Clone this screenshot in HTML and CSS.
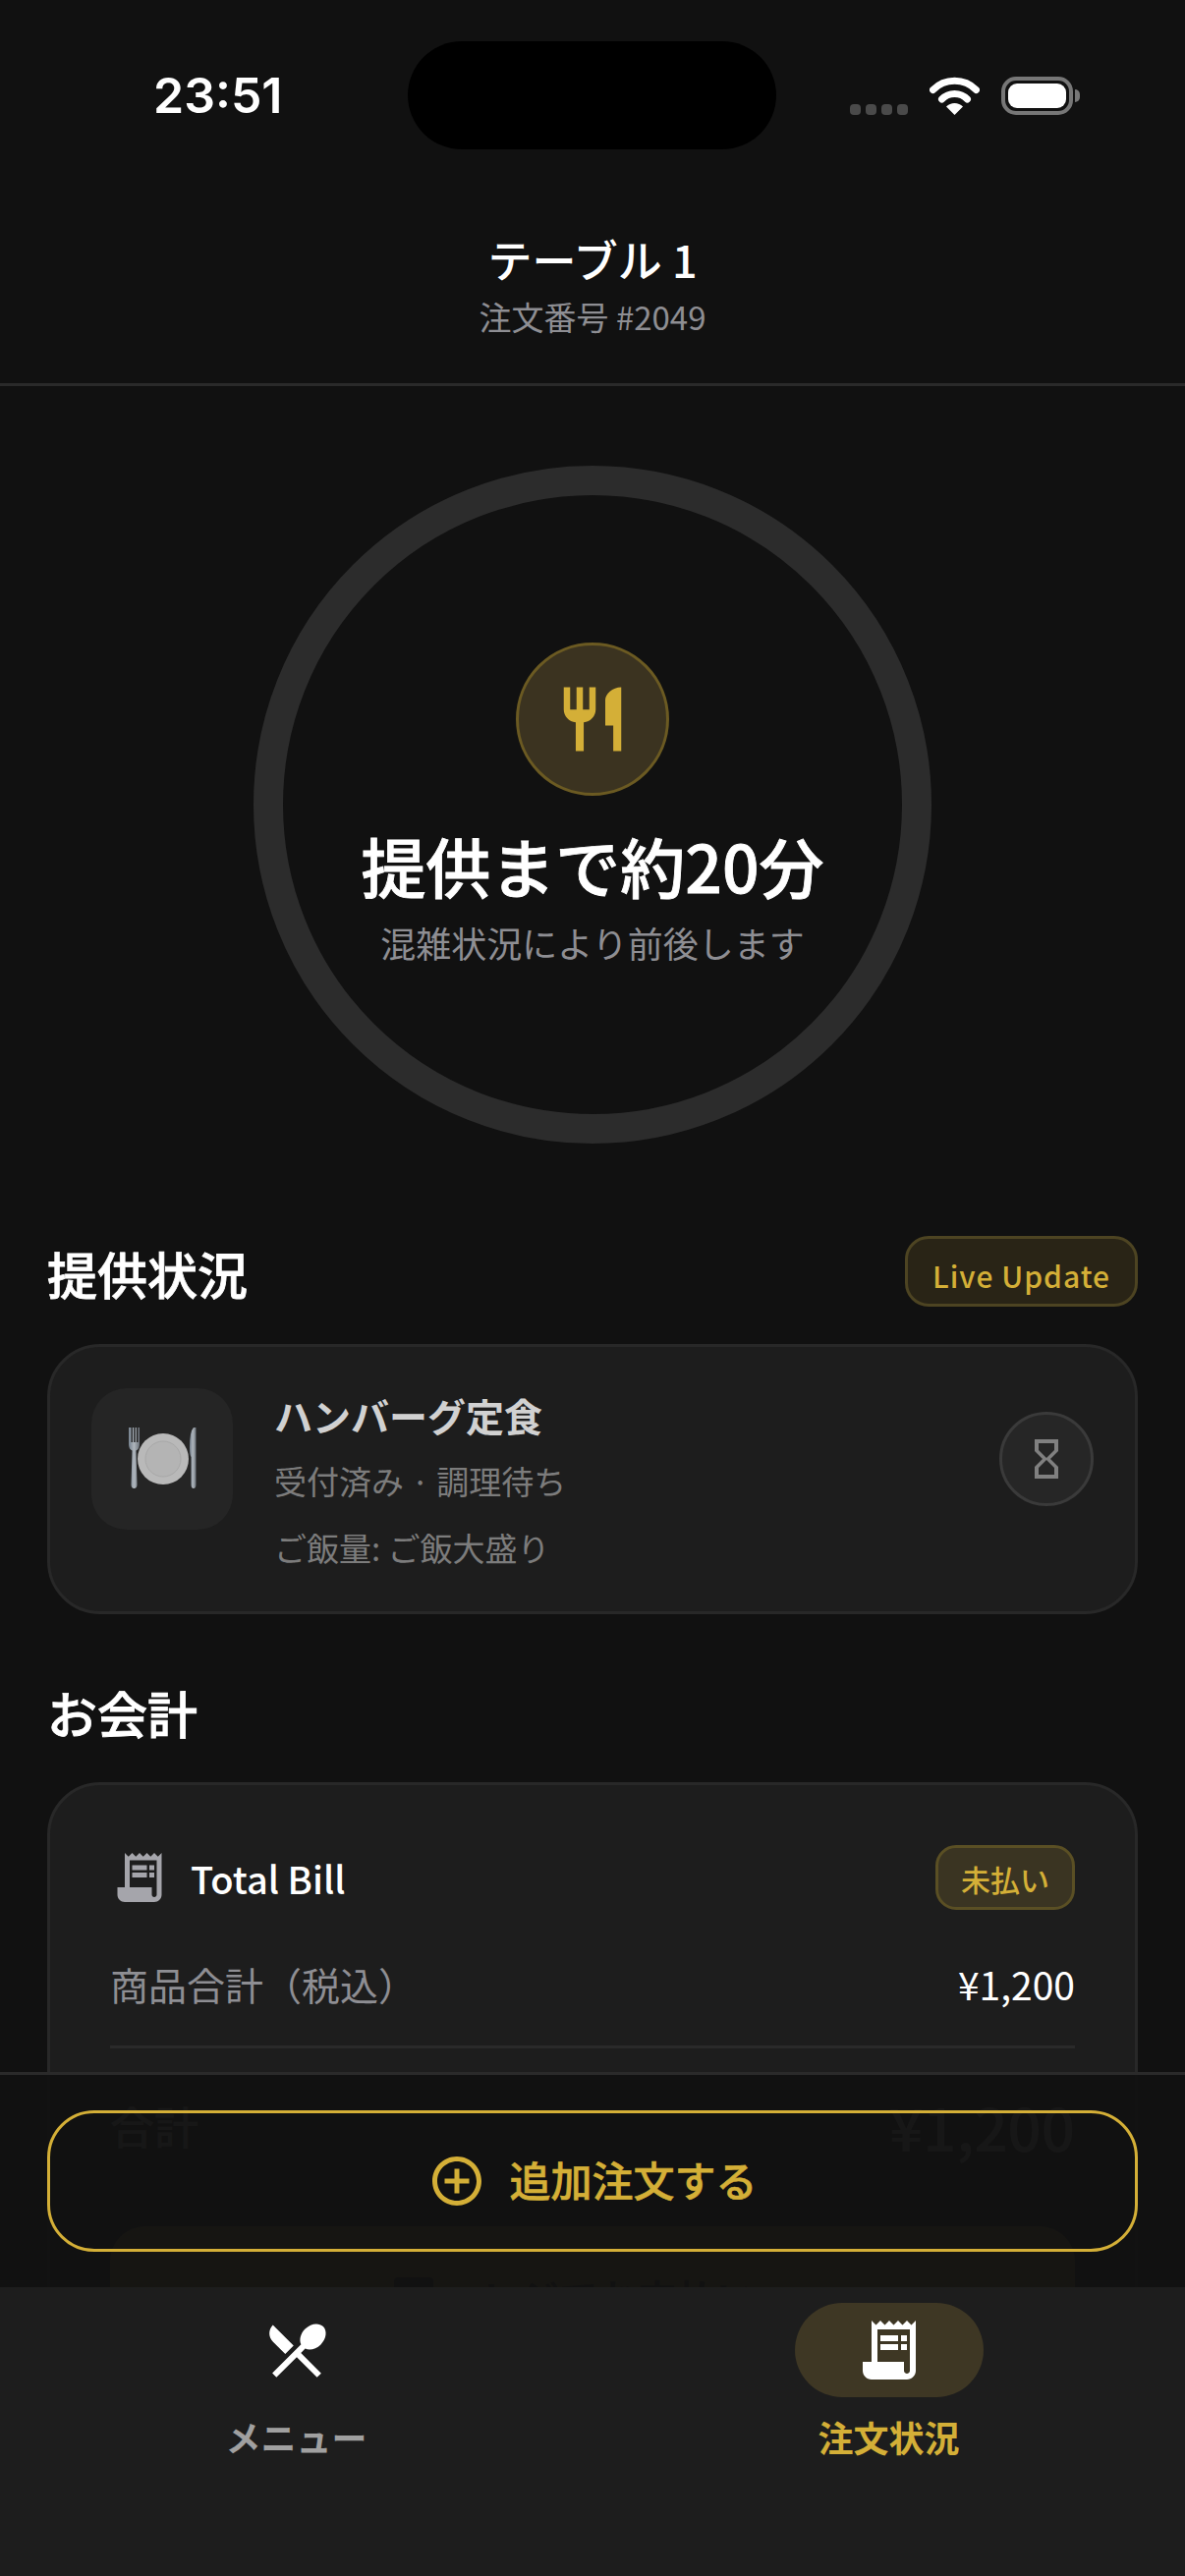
FILE: index.html
```html
<!DOCTYPE html>
<html lang="ja">
<head>
  <meta charset="utf-8">
  <title>注文状況</title>
  <link rel="stylesheet" href="styles.css">
</head>
<body>
  <div class="screen">

    <div class="statusbar">
      <div class="time">23:51</div>
      <div class="island"></div>
      <div class="status-icons">
        <div class="signal"><span></span><span></span><span></span><span></span></div>
        <svg class="wifi" viewBox="0 0 51 39">
          <path d="M3.5 13.5A31 31 0 0 1 47.5 13.5" fill="none" stroke="#fff" stroke-width="7" stroke-linecap="round"/>
          <path d="M12.5 23A18 18 0 0 1 38.5 23" fill="none" stroke="#fff" stroke-width="7" stroke-linecap="round"/>
          <path d="M25.5 39L17 30.5A12 12 0 0 1 34 30.5Z" fill="#fff"/>
        </svg>
        <div class="battery"><div class="battery-fill"></div></div>
        <div class="battery-cap"></div>
      </div>
    </div>

    <div class="header">
      <div class="header-title">テーブル 1</div>
      <div class="header-sub">注文番号 #2049</div>
    </div>

    <div class="hero">
      <div class="ring">
        <div class="ring-icon">
          <svg width="78" height="78" viewBox="0 0 24 24" fill="#d4af37"><path d="M11 9H9V2H7v7H5V2H3v7c0 2.12 1.66 3.84 3.75 3.97V22h2.5v-9.03C11.34 12.84 13 11.12 13 9V2h-2v7zm5-3v8h2.5v8H21V2c-2.76 0-5 2.24-5 4z"/></svg>
        </div>
        <div class="ring-title">提供まで約20分</div>
        <div class="ring-sub">混雑状況により前後します</div>
      </div>
    </div>

    <div class="section">
      <div class="section-head">
        <div class="section-title">提供状況</div>
        <div class="live-badge">Live Update</div>
      </div>
      <div class="card order-card">
        <div class="thumb">
          <svg width="80" height="70" viewBox="0 0 80 70">
            <defs>
              <linearGradient id="metal" x1="0" y1="0" x2="1" y2="0">
                <stop offset="0" stop-color="#75818e"/>
                <stop offset="0.5" stop-color="#aeb5bc"/>
                <stop offset="1" stop-color="#6c737b"/>
              </linearGradient>
            </defs>
            <path d="M6 3v17q0 5 3.500 6.500L8.500 61q0 4 3 4t3-4L13.500 26.500Q17 25 17 20V3h-1.500v15h-1.500V3h-1.300v15h-1.500V3h-1.300v15H8.500V3z" fill="url(#metal)"/>
            <circle cx="41" cy="35" r="26" fill="#b9b9b9"/>
            <circle cx="41" cy="35" r="18" fill="#b4b4b4" stroke="#a8a8a8"/>
            <path d="M72 3q-4 4-4 20 0 8 1.500 10l0 28q0 4 2.500 4t2.500-4V3z" fill="url(#metal)"/>
          </svg>
        </div>
        <div class="order-text">
          <div class="order-name">ハンバーグ定食</div>
          <div class="order-line">受付済み · 調理待ち</div>
          <div class="order-line order-option">ご飯量: ご飯大盛り</div>
        </div>
        <div class="wait-icon">
          <svg width="48" height="48" viewBox="0 0 24 24" fill="#808080"><path d="M6 2v6h.01L6 8.010 10 12l-4 4 .01.01H6V22h12v-5.990h-.01L18 16l-4-4 4-3.990-.01-.01H18V2H6zm10 14.500V20H8v-3.500l4-4 4 4zm-4-5l-4-4V4h8v3.500l-4 4z"/></svg>
        </div>
      </div>
    </div>

    <div class="section section-bill">
      <div class="section-title">お会計</div>
      <div class="card bill-card">
        <div class="bill-head">
          <div class="bill-label">
            <svg width="60" height="60" viewBox="0 0 24 24" fill="#a5a5ab"><path d="M19.500 3.500 18 2l-1.500 1.500L15 2l-1.500 1.500L12 2l-1.500 1.500L9 2 7.500 3.500 6 2v14H3v3c0 1.660 1.340 3 3 3h12c1.660 0 3-1.340 3-3V2l-1.500 1.500zM19 19c0 .55-.45 1-1 1s-1-.45-1-1v-3H8V5h11v14z"/><path d="M9 7h6v2H9zM16 7h2v2h-2zM9 10h6v2H9zM16 10h2v2h-2z"/></svg>
            <span>Total Bill</span>
          </div>
          <div class="unpaid-badge">未払い</div>
        </div>
        <div class="bill-row">
          <span class="bill-row-name">商品合計（税込）</span>
          <span>¥1,200</span>
        </div>
        <div class="bill-total">
          <span class="bill-total-name">合計</span>
          <span class="bill-total-price">¥1,200</span>
        </div>
        <div class="pay-box">
          <svg width="48" height="48" viewBox="0 0 24 24" fill="#111"><rect x="2" y="2" width="20" height="20" rx="2"/></svg>
          <span>レジでお支払いへ</span>
        </div>
      </div>
    </div>

    <div class="bottom">
      <div class="action">
        <div class="add-button">
          <svg width="60" height="60" viewBox="0 0 24 24" fill="#d4af37"><path d="M13 7h-2v4H7v2h4v4h2v-4h4v-2h-4V7zm-1-5C6.480 2 2 6.480 2 12s4.480 10 10 10 10-4.480 10-10S17.520 2 12 2zm0 18c-4.410 0-8-3.590-8-8s3.590-8 8-8 8 3.590 8 8-3.590 8-8 8z"/></svg>
          <span class="add-label">追加注文する</span>
        </div>
      </div>
      <div class="nav">
        <div class="nav-item">
          <div class="nav-icon">
            <svg width="72" height="72" viewBox="0 0 24 24" fill="#fff"><path d="M8.100 13.340l2.830-2.830L3.910 3.500c-1.560 1.560-1.560 4.090 0 5.660l4.190 4.180zm6.780-1.810c1.530.71 3.680.21 5.270-1.380 1.910-1.910 2.280-4.650.81-6.120-1.460-1.460-4.200-1.100-6.120.81-1.590 1.590-2.090 3.740-1.380 5.270L3.700 19.870l1.410 1.410L12 14.410l6.880 6.880 1.410-1.410L13.410 13l1.470-1.470z"/></svg>
          </div>
          <div class="nav-label">メニュー</div>
        </div>
        <div class="nav-item nav-item-active">
          <div class="nav-icon">
            <svg width="72" height="72" viewBox="0 0 24 24" fill="#fff"><path d="M19.500 3.500 18 2l-1.500 1.500L15 2l-1.500 1.500L12 2l-1.500 1.500L9 2 7.500 3.500 6 2v14H3v3c0 1.660 1.340 3 3 3h12c1.660 0 3-1.340 3-3V2l-1.500 1.500zM19 19c0 .55-.45 1-1 1s-1-.45-1-1v-3H8V5h11v14z"/><path d="M9 7h6v2H9zM16 7h2v2h-2zM9 10h6v2H9zM16 10h2v2h-2z"/></svg>
          </div>
          <div class="nav-label">注文状況</div>
        </div>
      </div>
    </div>

  </div>
</body>
</html>
```

FILE: styles.css
```css
* {
  box-sizing: border-box;
}

body {
  margin: 0;
  background: #111111;
  font-family: "Noto Sans CJK JP", "Noto Sans", sans-serif;
  color: #ffffff;
}

.screen {
  position: relative;
  width: 1206px;
  height: 2622px;
  overflow: hidden;
  background: #111111;
}

/* status bar */
.statusbar {
  display: grid;
  grid-template-columns: 415px 375px 1fr;
  height: 196px;
  padding-top: 42px;
}

.time {
  padding-left: 156px;
  padding-top: 25px;
  font-family: Inter, sans-serif;
  font-size: 50px;
  font-weight: 600;
  line-height: 60px;
}

.island {
  height: 110px;
  border-radius: 55px;
  background: #000000;
}

.status-icons {
  display: flex;
  align-items: flex-end;
  height: 75px;
  padding-left: 75px;
}

.signal {
  display: flex;
  gap: 5px;
  margin-right: 22px;
}

.signal span {
  width: 11px;
  height: 11px;
  border-radius: 4px;
  background: #4a4a4a;
}

.wifi {
  width: 51px;
  height: 39px;
  margin-right: 22px;
}

.battery {
  width: 73px;
  height: 39px;
  padding: 3px;
  border: 4px solid #777777;
  border-radius: 15px;
}

.battery-fill {
  height: 100%;
  border-radius: 9px;
  background: #ffffff;
}

.battery-cap {
  width: 5px;
  height: 13px;
  margin: 0 0 13px 2px;
  border-radius: 0 5px 5px 0;
  background: #777777;
}

/* header */
.header {
  height: 197px;
  border-bottom: 3px solid #2a2a2a;
  text-align: center;
}

.header-title {
  padding-top: 35px;
  font-size: 45px;
  font-weight: 500;
  line-height: 66px;
}

.header-sub {
  margin-top: 2px;
  font-size: 33px;
  line-height: 46px;
  color: #8e8e93;
}

/* ring */
.hero {
  display: flex;
  justify-content: center;
  padding-top: 81px;
}

.ring {
  display: flex;
  flex-direction: column;
  align-items: center;
  width: 690px;
  height: 690px;
  padding-top: 150px;
  border: 30px solid #2c2c2c;
  border-radius: 50%;
}

.ring-icon {
  display: flex;
  align-items: center;
  justify-content: center;
  width: 156px;
  height: 156px;
  border: 3px solid #6b5a22;
  border-radius: 50%;
  background: #3b3320;
}

.ring-title {
  margin-top: 25px;
  font-size: 66px;
  font-weight: 500;
  line-height: 90px;
  -webkit-text-stroke: 0.800px #ffffff;
}

.ring-sub {
  margin-top: 8px;
  font-size: 36px;
  line-height: 52px;
  color: #8e8e93;
}

/* sections */
.section {
  padding: 94px 48px 0;
}

.section-bill {
  padding-top: 60px;
}

.section-head {
  display: flex;
  align-items: center;
  justify-content: space-between;
  height: 72px;
}

.section-title {
  padding-top: 4px;
  font-size: 51px;
  font-weight: 500;
  line-height: 72px;
  -webkit-text-stroke: 0.800px #ffffff;
}

.live-badge {
  height: 72px;
  width: 237px;
  border: 3px solid #4d4422;
  border-radius: 24px;
  background: #292416;
  font-size: 30px;
  font-weight: 500;
  line-height: 74px;
  letter-spacing: 1px;
  text-align: center;
  color: #d4af37;
}

.card {
  border: 3px solid #282828;
  border-radius: 54px;
  background: #1d1d1d;
}

.order-card {
  display: flex;
  margin-top: 38px;
  height: 275px;
  padding: 42px 42px 0;
}

.thumb {
  display: flex;
  align-items: center;
  justify-content: center;
  flex: none;
  width: 144px;
  height: 144px;
  border-radius: 36px;
  background: #252525;
}

.order-text {
  flex: 1;
  padding-left: 42px;
}

.order-name {
  font-size: 39px;
  font-weight: 700;
  line-height: 54px;
  color: #d1d1d1;
}

.order-line {
  margin-top: 15px;
  font-size: 33px;
  line-height: 50px;
  color: #7c7c7c;
}

.order-option {
  margin-top: 18px;
}

.wait-icon {
  display: flex;
  align-items: center;
  justify-content: center;
  flex: none;
  width: 96px;
  height: 96px;
  margin-top: 24px;
  border: 3px solid #3a3a3a;
  border-radius: 50%;
  background: #262626;
}

/* bill */
.bill-card {
  margin-top: 35px;
  height: 760px;
  padding: 61px 61px 0;
}

.bill-head {
  display: flex;
  align-items: center;
  justify-content: space-between;
}

.bill-label {
  display: flex;
  align-items: center;
  gap: 22px;
  font-size: 38px;
  font-weight: 500;
}

.unpaid-badge {
  width: 142px;
  height: 66px;
  border: 3px solid #5a4f24;
  border-radius: 21px;
  background: #3a3422;
  font-size: 30px;
  font-weight: 500;
  line-height: 62px;
  text-align: center;
  color: #d4af37;
}

.bill-row {
  display: flex;
  justify-content: space-between;
  margin-top: 46px;
  padding-bottom: 34px;
  border-bottom: 3px solid #2a2a2a;
  font-size: 39px;
  line-height: 58px;
}

.bill-row-name {
  color: #8e8e93;
}

.bill-total {
  display: flex;
  align-items: center;
  justify-content: space-between;
  margin-top: 35px;
  font-weight: 500;
}

.bill-total-name {
  font-size: 45px;
}

.bill-total-price {
  font-size: 60px;
}

.pay-box {
  display: flex;
  align-items: center;
  justify-content: center;
  gap: 44px;
  margin-top: 59px;
  height: 144px;
  border-radius: 36px;
  background: #d4af37;
  font-size: 40px;
  font-weight: 700;
  color: #111111;
}

/* bottom */
.bottom {
  position: absolute;
  left: 0;
  right: 0;
  bottom: 0;
}

.action {
  height: 219px;
  padding: 36px 48px 0;
  border-top: 3px solid #2a2a2a;
  background: rgba(17, 17, 17, 0.975);
}

.add-button {
  display: flex;
  align-items: center;
  justify-content: center;
  gap: 23px;
  height: 144px;
  border: 3px solid #d4af37;
  border-radius: 48px;
  font-size: 42px;
  font-weight: 500;
  color: #d4af37;
}

.add-label {
  margin-bottom: 6px;
  -webkit-text-stroke: 0.600px #d4af37;
}

.nav {
  display: flex;
  height: 294px;
  padding-top: 16px;
  background: #1d1d1d;
}

.nav-item {
  flex: 1;
  display: flex;
  flex-direction: column;
  align-items: center;
}

.nav-icon {
  display: flex;
  align-items: center;
  justify-content: center;
  width: 192px;
  height: 96px;
  border-radius: 48px;
}

.nav-label {
  margin-top: 14px;
  font-size: 36px;
  font-weight: 700;
  line-height: 52px;
  color: #a0a0a0;
}

.nav-item-active .nav-icon {
  background: #3e3724;
}

.nav-item-active .nav-label {
  color: #d4af37;
}
```
